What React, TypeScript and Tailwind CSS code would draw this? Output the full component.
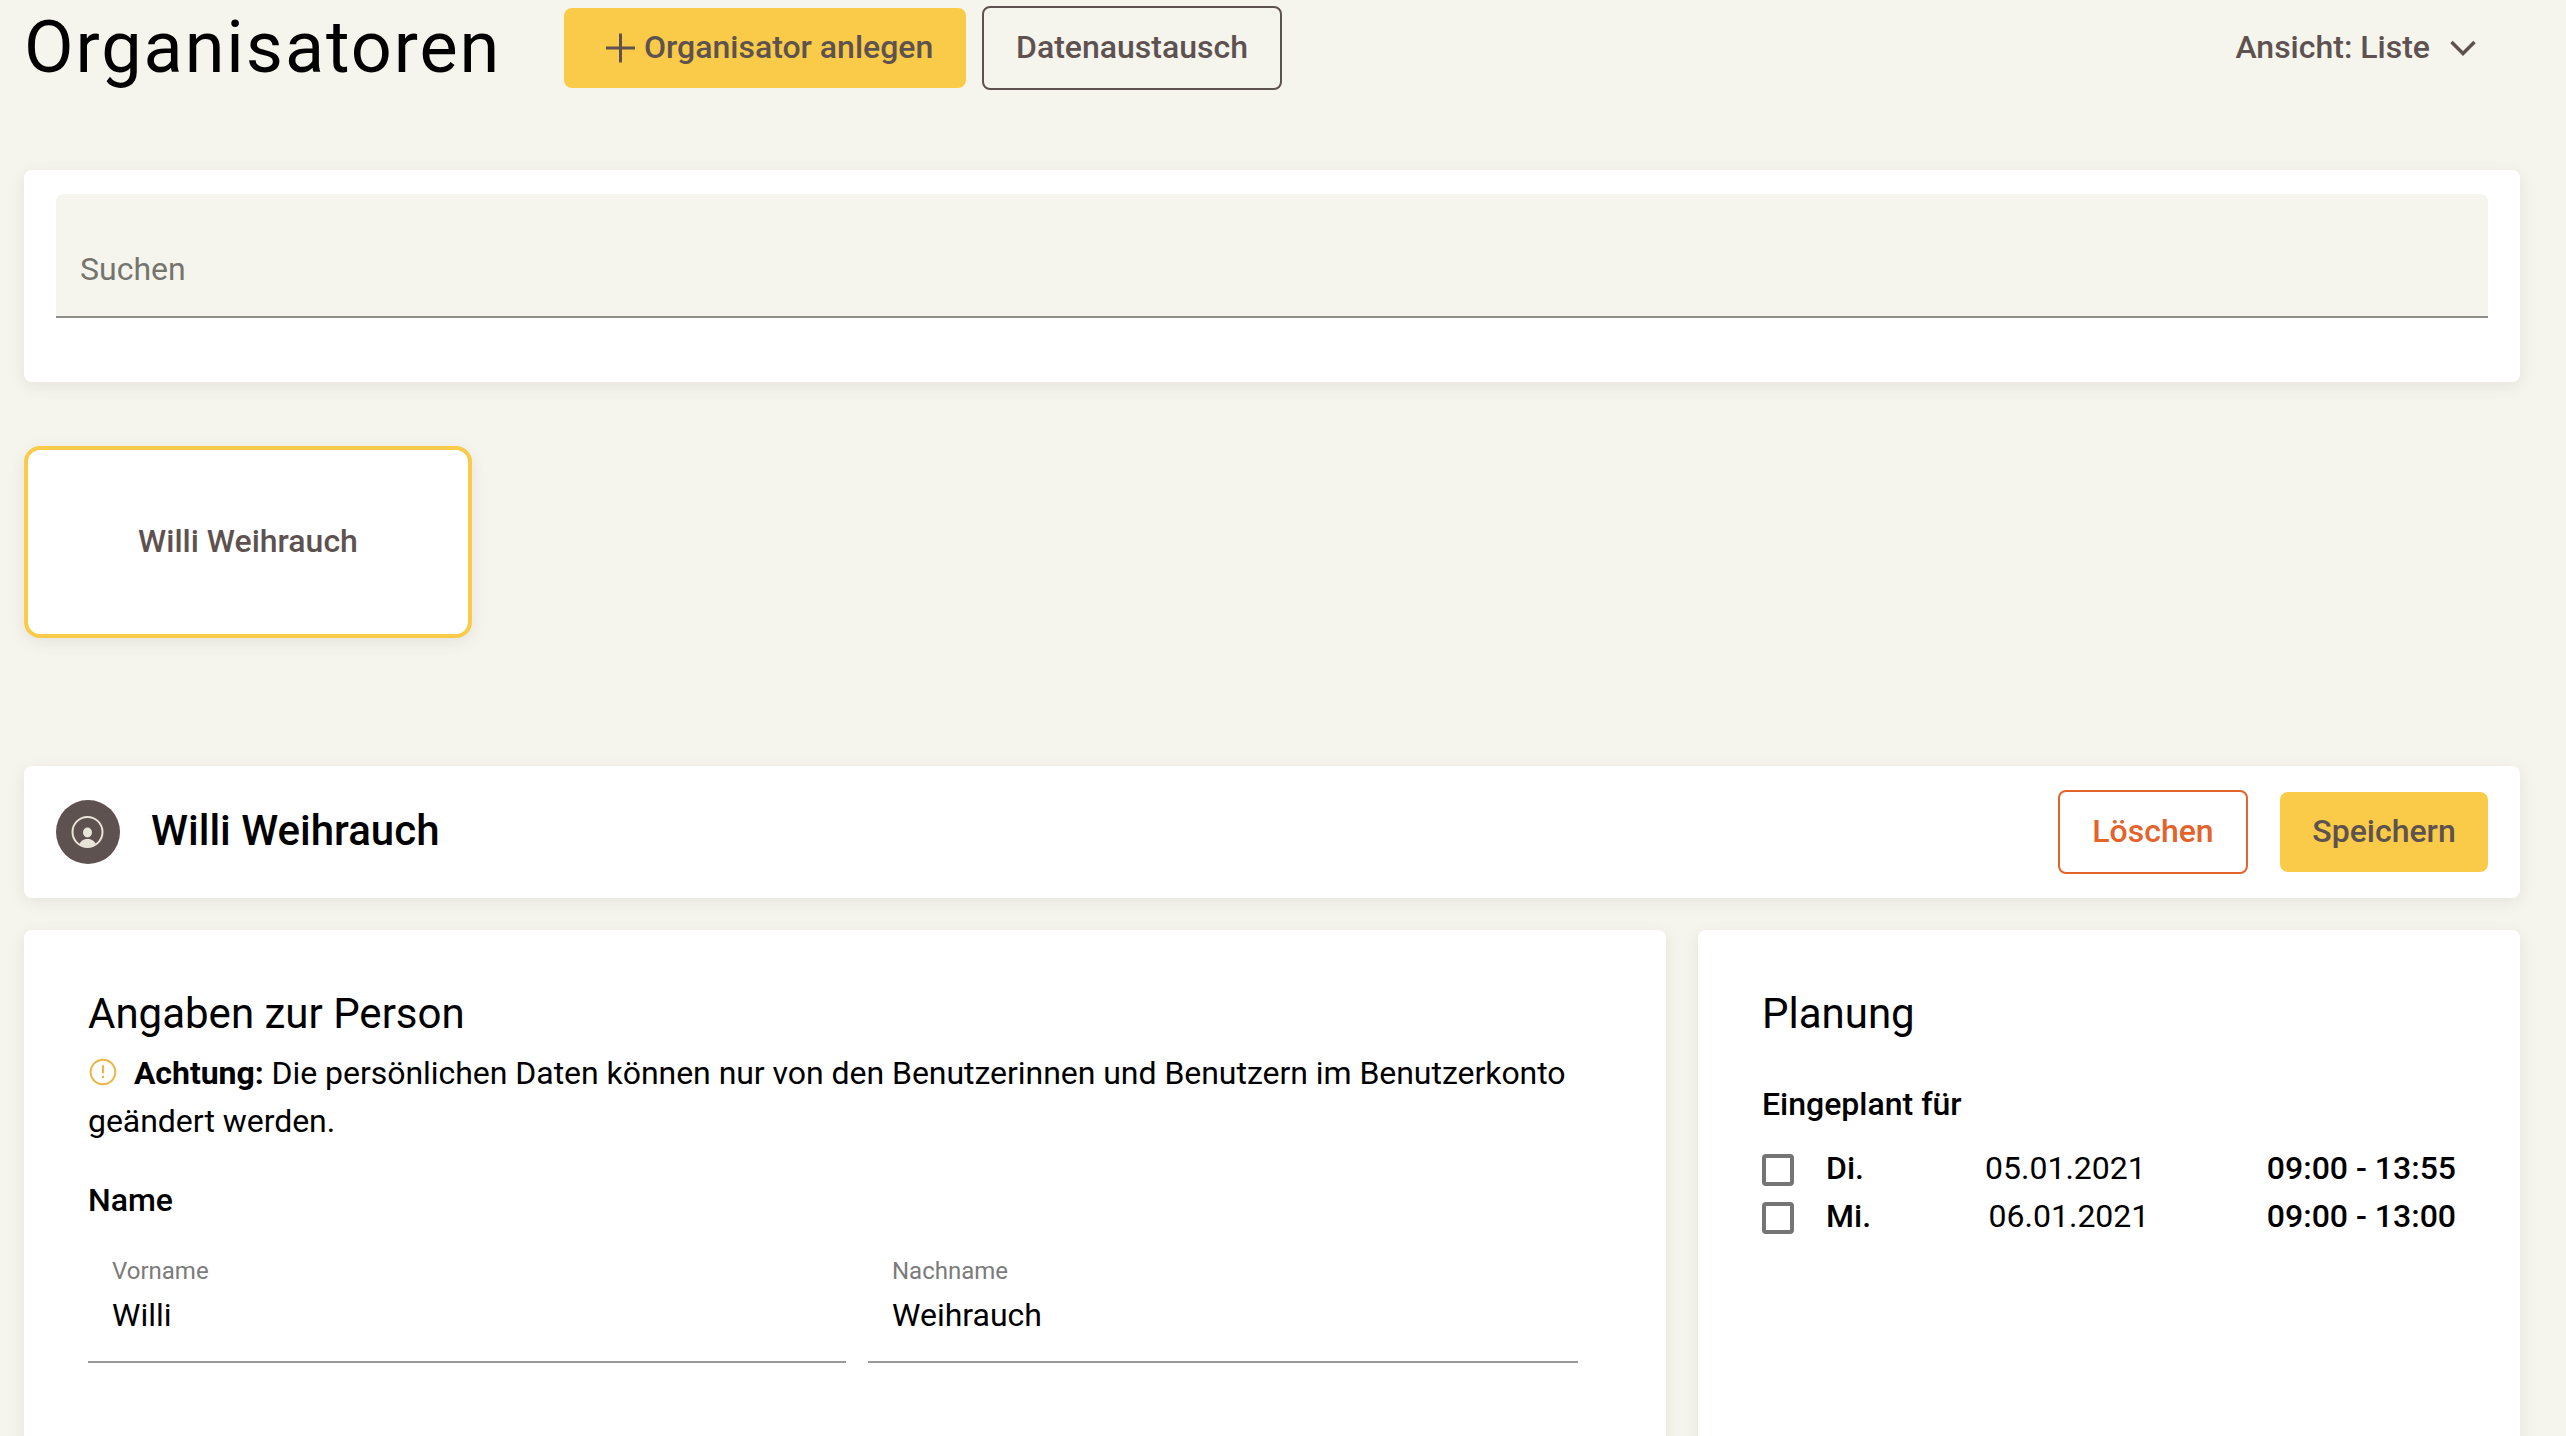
import React from "react";

const shadow = "shadow-[0_4px_16px_rgba(60,50,30,0.08)]";

function Field({ label, value, className }: { label: string; value: string; className: string }) {
  return (
    <div className={`${className} border-b-2 border-[#999999] pl-6 pt-[2px] h-[112px]`}>
      <div className="text-[24px] leading-[36px] text-[#7b7b7b]">{label}</div>
      <div className="mt-[2px] text-[32px] leading-[48px] text-black">{value}</div>
    </div>
  );
}

function Row({ day, date, time }: { day: string; date: string; time: string }) {
  return (
    <div className="flex items-center justify-between h-12 text-[32px] leading-[48px] text-black">
      <div className="flex items-center gap-8">
        <span className="mt-1 w-8 h-8 rounded border-4 border-[#757575] bg-white" />
        <span className="font-medium">{day}</span>
      </div>
      <span>{date}</span>
      <span className="font-medium">{time}</span>
    </div>
  );
}

export default function App() {
  return (
    <div className="h-screen overflow-hidden bg-[#f5f4ed] pl-6 pr-[46px] [font-family:Roboto,sans-serif] text-[#5e5250]">
      <header className="flex items-center h-24">
        <h1 className="text-[72px] leading-[96px] font-normal text-black tracking-[0.027em] w-[540px] shrink-0">Organisatoren</h1>
        <button className="flex items-center h-20 w-[402px] pl-8 pb-[2px] rounded-lg bg-[#f9cb48] text-[32px] font-medium">
          <svg className="mt-[2px]" width="48" height="48" viewBox="0 0 48 48" fill="none" stroke="#5e5250" strokeWidth="3">
            <path d="M24.500 9.500v29M10 24h29" />
          </svg>
          <span>Organisator anlegen</span>
        </button>
        <button className="ml-4 h-[84px] w-[300px] pb-[2px] rounded-lg border-2 border-[#5e5250] text-[32px] font-medium">Datenaustausch</button>
        <button className="ml-auto mr-[44px] pb-[2px] flex items-center gap-5 text-[32px] font-medium">
          <span>Ansicht: Liste</span>
          <svg className="mt-[2px]" width="26" height="16" viewBox="0 0 26 16" fill="none" stroke="#5e5250" strokeWidth="3.500">
            <path d="M1.500 2L13 13.500L24.500 2" />
          </svg>
        </button>
      </header>

      <section className={`mt-[74px] h-[212px] bg-white rounded-lg px-8 pt-6 ${shadow}`}>
        <div className="h-[124px] bg-[#f5f4ed] rounded-t-lg border-b-2 border-[#8f8f88] px-6 pt-[51px] text-[32px] leading-[48px] text-[#75756e]">Suchen</div>
      </section>

      <button className={`block mt-16 w-[448px] h-[192px] pb-[2px] rounded-2xl border-4 border-[#f9cb48] bg-white text-[32px] font-medium ${shadow}`}>Willi Weihrauch</button>

      <section className={`mt-32 h-[132px] bg-white rounded-lg pl-8 pr-8 flex items-center ${shadow}`}>
        <svg width="64" height="64" viewBox="0 0 64 64">
          <circle cx="32" cy="32" r="32" fill="#5e5250" />
          <circle cx="31.500" cy="32" r="15" fill="none" stroke="#e8e4d8" strokeWidth="2" />
          <ellipse cx="31.500" cy="32.500" rx="4.500" ry="5" fill="#e8e4d8" />
          <path d="M23.500 44.500c1-4 4.500-5.500 8-5.500s7 1.500 8.500 5.500c-2.500 1.700-5 2.500-8 2.500s-6-.8-8.500-2.500z" fill="#e8e4d8" />
        </svg>
        <h2 className="ml-[31px] mb-[3px] text-[42px] leading-[60px] font-medium text-black">Willi Weihrauch</h2>
        <button className="ml-auto h-[84px] w-[190px] pb-[2px] rounded-lg border-2 border-[#e4632b] text-[#e4632b] text-[32px] font-medium">Löschen</button>
        <button className="ml-8 h-20 w-[208px] pb-[2px] rounded-lg bg-[#f9cb48] text-[32px] font-medium">Speichern</button>
      </section>

      <div className="mt-8 flex gap-8 items-start">
        <section className={`w-[1642px] shrink-0 h-[700px] bg-white rounded-lg pl-16 pr-[74px] pt-[54px] ${shadow}`}>
          <h3 className="text-[42px] leading-[60px] font-normal text-black">Angaben zur Person</h3>
          <p className="mt-[5px] text-[32px] leading-[48px] tracking-[-0.04px] text-black">
            <svg className="inline-block align-[-4px] mr-[7px] -ml-[1px]" width="32" height="32" viewBox="0 0 24 24" fill="#eab544">
              <path d="M11.200 14.900h1.600v1.600h-1.600zM11.200 7h1.600v6h-1.600zM12 2C6.470 2 2 6.480 2 12s4.470 10 10 10 10-4.480 10-10S17.520 2 12 2zm0 18.500c-4.700 0-8.500-3.800-8.500-8.500S7.300 3.500 12 3.500s8.500 3.800 8.500 8.500-3.800 8.500-8.500 8.500z" />
            </svg>{" "}
            <strong className="font-bold">Achtung:</strong> Die persönlichen Daten können nur von den Benutzerinnen und Benutzern im Benutzerkonto geändert werden.
          </p>
          <h4 className="mt-[31px] text-[32px] leading-[48px] font-medium text-black">Name</h4>
          <div className="mt-[27px] flex gap-[22px]">
            <Field label="Vorname" value="Willi" className="w-[758px]" />
            <Field label="Nachname" value="Weihrauch" className="w-[710px]" />
          </div>
        </section>
        <section className={`flex-1 h-[700px] bg-white rounded-lg px-16 pt-[54px] ${shadow}`}>
          <h3 className="text-[42px] leading-[60px] font-normal text-black">Planung</h3>
          <h4 className="mt-9 text-[32px] leading-[48px] font-medium text-black">Eingeplant für</h4>
          <div className="mt-4">
            <Row day="Di." date="05.01.2021" time="09:00 - 13:55" />
            <Row day="Mi." date="06.01.2021" time="09:00 - 13:00" />
          </div>
        </section>
      </div>
    </div>
  );
}
